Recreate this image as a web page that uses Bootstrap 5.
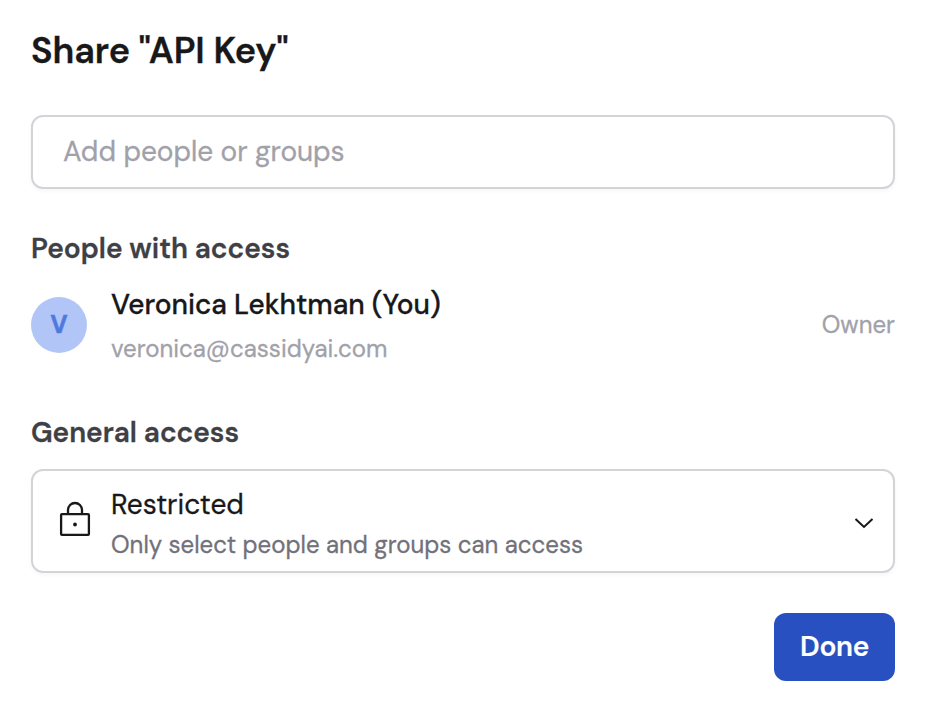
<!DOCTYPE html>
<html lang="en">
<head>
<meta charset="utf-8">
<meta name="viewport" content="width=device-width, initial-scale=1">
<title>Share "API Key"</title>
<link href="https://cdn.jsdelivr.net/npm/bootstrap@5.3.0/dist/css/bootstrap.min.css" rel="stylesheet">
<style>
body { font-family: "DM Sans", Inter, "Liberation Sans", sans-serif; color: #18181b; background: #fff; -webkit-text-stroke: .3px; }
.share-panel { padding: 29px 39px 0 31px; }
.share-title { font-size: 36px; line-height: 44px; font-weight: 650; letter-spacing: -.05px; margin-bottom: 42px; }
.share-input, .access-select { border: 2px solid #d4d4d8; border-radius: 12px; box-shadow: 0 2px 4px rgba(0,0,0,.04); }
.share-input { height: 74px; padding: 0 30px 2px; font-size: 28px; color: #18181b; -webkit-text-stroke: .3px; }
.share-input::placeholder { color: #a1a1aa; opacity: 1; }
.section-title { font-size: 28px; line-height: 40px; font-weight: 600; color: #3f3f46; }
.people-title { margin: 40px 0 16px; }
.access-title { margin: 48px 0 16px; }
.text-main { font-size: 28px; line-height: 40px; }
.text-sub { font-size: 24px; line-height: 32px; letter-spacing: .02px; }
.muted-light { color: #a1a1aa; }
.muted-dark { color: #71717a; }
.avatar { width: 56px; height: 56px; background: #b1c5f6; color: #5079de; font-size: 24px; font-weight: 700; -webkit-text-stroke: .6px; }
.access-select { height: 104px; padding: 0 18px 0 26px; }
.lock-icon { margin: 0 20px 4px 0; }
.chevron-icon { margin-top: 4px; }
.done-row { margin-top: 40px; }
.done-btn { width: 121px; height: 68px; border-radius: 12px; font-size: 28px; font-weight: 600; letter-spacing: -.3px; background: #2850c0; color: #fff; -webkit-text-stroke: .2px; }
</style>
</head>
<body>
<main class="share-panel">
  <h1 class="share-title">Share "API Key"</h1>
  <input class="form-control share-input" type="text" placeholder="Add people or groups" aria-label="Add people or groups">
  <h2 class="section-title people-title">People with access</h2>
  <div class="d-flex align-items-center">
    <div class="avatar rounded-circle d-flex align-items-center justify-content-center flex-shrink-0">V</div>
    <div class="ms-4 flex-grow-1">
      <div class="text-main fw-medium">Veronica Lekhtman (You)</div>
      <div class="text-sub muted-light mt-2">veronica@cassidyai.com</div>
    </div>
    <div class="text-sub muted-light">Owner</div>
  </div>
  <h2 class="section-title access-title">General access</h2>
  <div class="access-select d-flex align-items-center">
    <svg class="lock-icon" width="32" height="36" viewBox="0 0 32 36" fill="none" stroke="#18181b" stroke-width="2.3" stroke-linejoin="round"><rect x="2.1" y="13.2" width="27.8" height="20.6" rx=".8"/><path d="M9 13V9a7 7 0 0 1 14 0v4"/><circle cx="16" cy="23.5" r="1.9" fill="#18181b" stroke="none"/></svg>
    <div class="flex-grow-1 pt-1">
      <div class="text-main">Restricted</div>
      <div class="text-sub muted-dark mt-1">Only select people and groups can access</div>
    </div>
    <svg class="chevron-icon" width="22" height="14" viewBox="0 0 22 14" fill="none" stroke="#18181b" stroke-width="2"><path d="m2.5 3 8.5 8 8.5-8"/></svg>
  </div>
  <div class="done-row d-flex justify-content-end"><button type="button" class="btn done-btn border-0 p-0">Done</button></div>
</main>
<script src="https://cdn.jsdelivr.net/npm/bootstrap@5.3.0/dist/js/bootstrap.bundle.min.js"></script>
</body>
</html>
